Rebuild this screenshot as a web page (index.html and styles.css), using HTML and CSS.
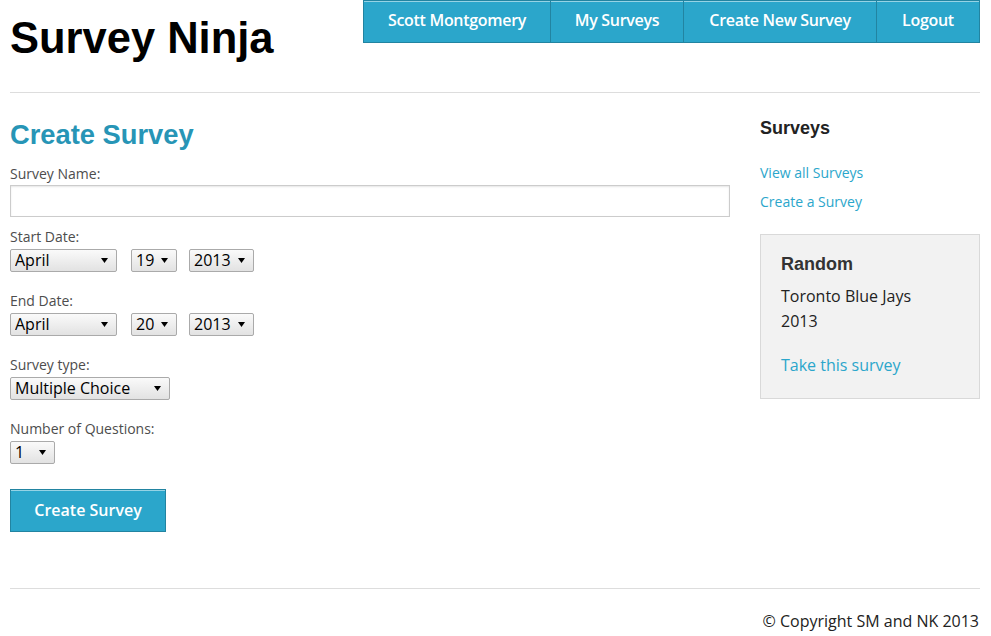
FILE: index.html
```html
<!DOCTYPE html>
<html>
<head>
<meta charset="utf-8">
<title>Survey Ninja</title>
<link rel="stylesheet" href="styles.css">
</head>
<body>
<div class="page">
  <header class="header">
    <h1 class="logo">Survey Ninja</h1>
    <nav class="nav">
      <a class="nav-item nav-user" href="#">Scott Montgomery</a>
      <a class="nav-item nav-mine" href="#">My Surveys</a>
      <a class="nav-item nav-new" href="#">Create New Survey</a>
      <a class="nav-item nav-out" href="#">Logout</a>
    </nav>
  </header>
  <hr class="rule rule-top">
  <div class="content">
    <main class="main">
      <h2 class="title">Create Survey</h2>
      <form class="form">
        <div class="field field-name">
          <label class="label">Survey Name:</label>
          <input class="text-input" type="text">
        </div>
        <div class="field">
          <label class="label">Start Date:</label>
          <div class="select-row">
            <select class="sel sel-month"><option>April</option></select>
            <select class="sel sel-day"><option>19</option></select>
            <select class="sel sel-year"><option>2013</option></select>
          </div>
        </div>
        <div class="field">
          <label class="label">End Date:</label>
          <div class="select-row">
            <select class="sel sel-month"><option>April</option></select>
            <select class="sel sel-day"><option>20</option></select>
            <select class="sel sel-year"><option>2013</option></select>
          </div>
        </div>
        <div class="field">
          <label class="label">Survey type:</label>
          <div class="select-row">
            <select class="sel sel-type"><option>Multiple Choice</option></select>
          </div>
        </div>
        <div class="field field-last">
          <label class="label">Number of Questions:</label>
          <div class="select-row">
            <select class="sel sel-num"><option>1</option></select>
          </div>
        </div>
        <button class="btn" type="button">Create Survey</button>
      </form>
    </main>
    <aside class="side">
      <h3 class="side-title">Surveys</h3>
      <ul class="side-links">
        <li><a href="#">View all Surveys</a></li>
        <li><a href="#">Create a Survey</a></li>
      </ul>
      <div class="panel">
        <h4 class="panel-title">Random</h4>
        <p class="panel-text">Toronto Blue Jays<br>2013</p>
        <a class="panel-link" href="#">Take this survey</a>
      </div>
    </aside>
  </div>
  <hr class="rule rule-bottom">
  <footer class="footer">© Copyright SM and NK 2013</footer>
</div>
</body>
</html>
```
FILE: styles.css
```css
* { box-sizing: border-box; }
html, body { margin: 0; padding: 0; background: #fff; }
body {
  font-family: "Open Sans", "DejaVu Sans", sans-serif;
  color: #222;
}
a { color: #2ba6cb; text-decoration: none; }
.page { width: 970px; margin-left: 10px; }

.header { display: flex; justify-content: space-between; align-items: flex-start; height: 92px; }
.logo {
  font-family: "Liberation Sans", Arial, sans-serif;
  font-size: 43.5px; font-weight: bold; color: #000;
  margin: 12px 0 0; line-height: 52px;
}
.nav { display: flex; }
.nav-item {
  display: block; height: 43px; line-height: 39px;
  padding: 0; text-align: center; white-space: nowrap;
  background: #2ba6cb; color: #fff; font-size: 16px; font-weight: 600;
  border: 1px solid #2284a1; border-left-width: 0;
  box-shadow: inset 0 1px 0 rgba(255,255,255,0.5);
  letter-spacing: -0.3px;
}
.nav-user { width: 188px; border-left-width: 1px; }
.nav-mine { width: 133px; }
.nav-new { width: 193px; }
.nav-out { width: 103px; }

.rule { border: 0; border-top: 1px solid #ddd; margin: 0; }

.content { display: flex; justify-content: space-between; padding-top: 24px; }
.main { width: 720px; }
.title {
  font-family: "Liberation Sans", Arial, sans-serif;
  font-size: 27.3px; font-weight: bold; color: #2795b6;
  margin: 0; line-height: 36px;
}
.form { margin-top: 11px; }
.field { margin-bottom: 19px; }
.field-name { margin-bottom: 10px; }
.field-name .label { margin-bottom: 1px; }
.field-last { margin-bottom: 25px; }
.label { display: block; font-size: 14px; line-height: 20px; color: #4d4d4d; margin-bottom: 2px; }
.text-input {
  display: block; width: 720px; height: 32px; margin: 0;
  border: 1px solid #ccc; background: #fff;
  box-shadow: inset 0 1px 2px rgba(0,0,0,0.1);
}
.select-row { display: flex; }
.sel {
  -webkit-appearance: none; appearance: none;
  height: 23px; margin: 0; padding: 0 18px 0 4px;
  font-family: "Open Sans", "DejaVu Sans", sans-serif; font-size: 16px; color: #000;
  line-height: 21px;
  border: 1px solid #aaa; border-radius: 2px;
  background-color: #eee;
  background-image: url("data:image/svg+xml,%3Csvg xmlns='http://www.w3.org/2000/svg' width='7' height='5'%3E%3Cpath d='M0 0h7L3.5 5z' fill='%23000'/%3E%3C/svg%3E"), linear-gradient(#fafafa, #e2e2e2);
  background-repeat: no-repeat, no-repeat;
  background-position: right 8px center, 0 0;
}
.sel-month { width: 107px; }
.sel-day { width: 46px; margin-left: 14px; }
.sel-year { width: 65px; margin-left: 12px; }
.sel-type { width: 160px; }
.sel-num { width: 45px; }

.btn {
  display: block; width: 156px; height: 43px; margin: 0;
  background: #2ba6cb; color: #fff;
  font-family: "Open Sans", "DejaVu Sans", sans-serif; font-size: 16px; font-weight: 600;
  border: 1px solid #2284a1;
  box-shadow: inset 0 1px 0 rgba(255,255,255,0.5);
  padding: 0 0 2px;
}

.side { width: 220px; }
.side-title {
  font-family: "Liberation Sans", Arial, sans-serif;
  font-size: 18px; font-weight: bold; color: #222;
  margin: 0; line-height: 22px;
}
.side-links { list-style: none; margin: 19px 0 0; padding: 0; }
.side-links li { font-size: 14px; line-height: 29px; }
.panel {
  margin-top: 18px;
  background: #f2f2f2; border: 1px solid #d9d9d9;
  padding: 18px 20px 20px;
  height: 165px;
}
.panel-title {
  font-family: "Liberation Sans", Arial, sans-serif;
  font-size: 18px; font-weight: bold; color: #333;
  margin: 0; line-height: 22px;
}
.panel-text { font-size: 16px; line-height: 25px; margin: 9px 0 0; color: #222; }
.panel-link { display: block; font-size: 16px; line-height: 25px; margin-top: 19px; }

.rule-bottom { margin-top: 56px; }
.footer { text-align: right; font-size: 16px; padding-top: 21px; line-height: 22px; margin-right: 1px; }
```
